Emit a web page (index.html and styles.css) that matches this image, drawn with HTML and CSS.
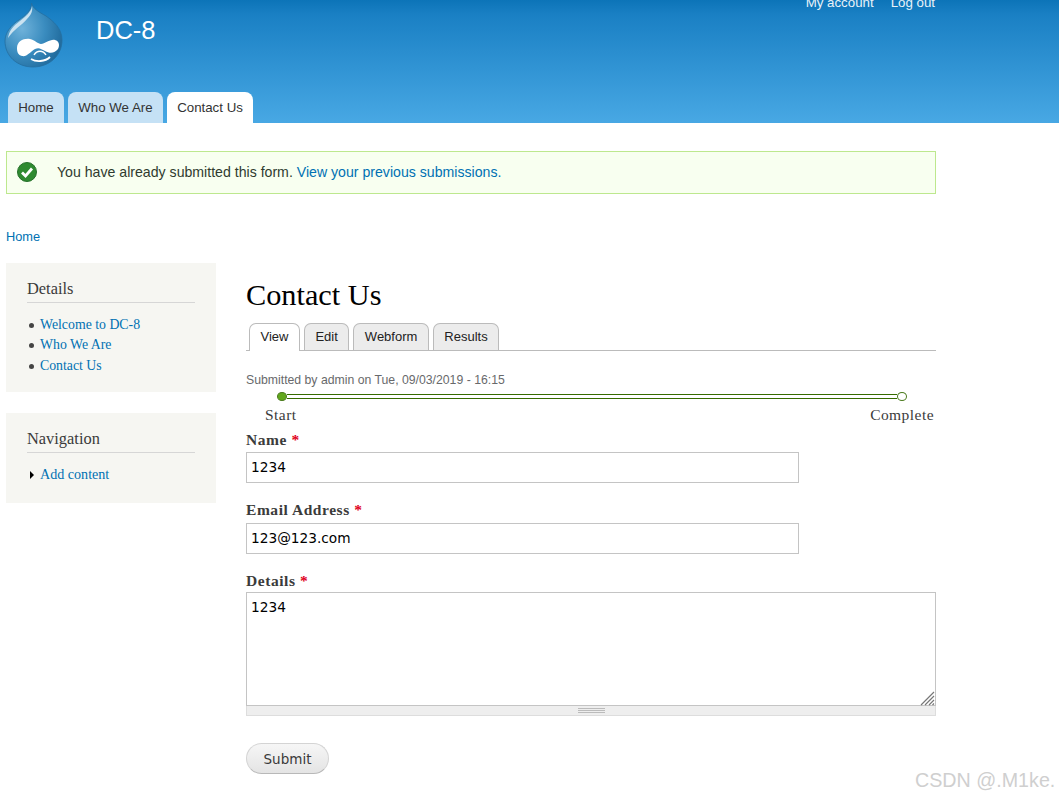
FILE: index.html
```html
<!DOCTYPE html>
<html lang="en">
<head>
<meta charset="utf-8">
<title>Contact Us | DC-8</title>
<link rel="stylesheet" href="styles.css">
</head>
<body>
<header class="site-header">
  <div class="header-top">
    <svg class="logo" viewBox="0 0 60 66" width="60" height="66" aria-label="Drupal logo">
      <defs>
        <radialGradient id="drop" cx="0.3" cy="0.4" r="0.8">
          <stop offset="0" stop-color="#6fb2da"/>
          <stop offset="0.5" stop-color="#3a8cbf"/>
          <stop offset="1" stop-color="#1b6496"/>
        </radialGradient>
      </defs>
      <path d="M27.5 1 C28 8 22 13 15 18 C7 23 1 31 1 39 C1 54 13 65 29 65 C45 65 58 54 58 38 C58 26 49 19 42 14 C35 10 29 7 27.5 1 Z" fill="url(#drop)" stroke="#256f9f" stroke-width="0.8"/>
      <path d="M28 4 C27 10 22 14 16 19 C9 24 5 29 4 36 C10 27 17 24 23 17 C27 13 29 9 28 4 Z" fill="#d6e9f4" opacity="0.9"/>
      <path d="M13 46 C13 39 20 36 26 37 C31 38 34 42 37 42 C41 42 46 37 51 38 C55 39 56 43 54 47 C51 51 46 52 41 49 C37 47 35 45 31 47 C26 50 23 55 18 54 C14 53 13 50 13 46 Z" fill="#fff"/>
      <path d="M30 53 C33 48 39 48 42 53" fill="none" stroke="#fff" stroke-width="1.4"/>
      <path d="M27 57 C32 60 41 60 46 55" fill="none" stroke="#fff" stroke-width="1.8"/>
    </svg>
    <div class="site-name">DC-8</div>
    <nav class="secondary-menu">
      <a href="#">My account</a>
      <a href="#">Log out</a>
    </nav>
  </div>
  <nav class="main-menu">
    <a class="main-tab" href="#">Home</a>
    <a class="main-tab" href="#">Who We Are</a>
    <a class="main-tab is-active" href="#">Contact Us</a>
  </nav>
</header>

<div class="page">
  <div class="message">
    <svg class="check" viewBox="0 0 20 20" width="20" height="20">
      <circle cx="10" cy="10" r="9.5" fill="#2f8a30" stroke="#26702a"/>
      <path d="M5 10.5 L8.5 14 L15 6.5" fill="none" stroke="#fff" stroke-width="2.8"/>
    </svg>
    <p class="message-text">You have already submitted this form. <a href="#">View your previous submissions.</a></p>
  </div>

  <div class="breadcrumb"><a href="#">Home</a></div>

  <div class="columns">
    <aside class="sidebar">
      <section class="block">
        <h2 class="block-title">Details</h2>
        <ul class="block-list">
          <li><a href="#">Welcome to DC-8</a></li>
          <li><a href="#">Who We Are</a></li>
          <li><a href="#">Contact Us</a></li>
        </ul>
      </section>
      <section class="block block-nav">
        <h2 class="block-title">Navigation</h2>
        <div class="nav-item">
          <span class="arrow"></span>
          <a href="#">Add content</a>
        </div>
      </section>
    </aside>

    <main class="content">
      <h1 class="page-title">Contact Us</h1>
      <ul class="tabs">
        <li class="tab is-active"><a href="#">View</a></li>
        <li class="tab"><a href="#">Edit</a></li>
        <li class="tab"><a href="#">Webform</a></li>
        <li class="tab"><a href="#">Results</a></li>
      </ul>
      <p class="submitted">Submitted by admin on Tue, 09/03/2019 - 16:15</p>

      <div class="progress">
        <div class="progress-track">
          <span class="dot dot-done"></span>
          <span class="bar"></span>
          <span class="dot"></span>
        </div>
        <div class="progress-labels">
          <span>Start</span>
          <span>Complete</span>
        </div>
      </div>

      <form class="form">
        <div class="field field-name">
          <label class="label" for="name">Name <span class="req">*</span></label>
          <input class="input" id="name" type="text" value="1234">
        </div>
        <div class="field field-email">
          <label class="label" for="email">Email Address <span class="req">*</span></label>
          <input class="input input-email" id="email" type="text" value="123@123.com">
        </div>
        <div class="field field-details">
          <label class="label" for="details">Details <span class="req">*</span></label>
          <div class="textarea-wrap">
            <textarea class="textarea" id="details">1234</textarea>
            <svg class="resizer" viewBox="0 0 15 15" width="15" height="15">
              <path d="M1 14 L14 1 M5 14 L14 5 M9 14 L14 9 M12.5 14 L14 12.5" stroke="#777" stroke-width="1.2" fill="none"/>
            </svg>
          </div>
          <div class="grippie"><span class="grip"></span></div>
        </div>
        <button class="submit" type="button">Submit</button>
      </form>
    </main>
  </div>
</div>
<div class="watermark">CSDN @.M1ke.</div>
</body>
</html>
```
FILE: styles.css
```css
* { box-sizing: border-box; }
html, body { margin: 0; padding: 0; height: 797px; overflow: hidden; }
body { background: #fff; color: #3b3b3b; font-family: "Liberation Sans", Arial, sans-serif; font-size: 14px; position: relative; }
a { color: #0071b3; text-decoration: none; }
p, h1, h2, ul { margin: 0; padding: 0; }

.site-header { height: 123px; background: linear-gradient(#0c74b8 0, #1a80c4 12%, #48a8e4 100%); display: flex; flex-direction: column; overflow: hidden; }
.header-top { display: flex; align-items: flex-start; height: 92px; width: 935px; }
.logo { margin: 2px 0 0 4px; flex: none; }
.site-name { margin: 14px 0 0 32px; font-size: 25.5px; line-height: 32px; color: #fff; flex: 1; }
.secondary-menu { display: flex; gap: 17px; margin-top: -5px; font-size: 13.3px; line-height: 16px; }
.secondary-menu a { color: #e8f2f9; }
.main-menu { display: flex; gap: 4px; padding-left: 8px; height: 31px; }
.main-tab { display: flex; align-items: center; padding: 0 10.25px 1px; height: 31px; background: #c5e1f5; color: #333; border-radius: 8px 8px 0 0; font-size: 13.3px; }
.main-tab.is-active { background: #fff; }

.page { width: 936px; padding-left: 6px; padding-top: 28px; }
.message { display: flex; align-items: center; height: 43px; background: #f8fff0; border: 1px solid #bde88e; padding: 0 0 1px 10px; }
.check { flex: none; }
.message-text { margin-left: 20px; line-height: 20px; color: #2f3b2f; font-size: 14.13px; }
.breadcrumb { margin-top: 35px; font-size: 12.8px; line-height: 16px; }

.columns { display: flex; gap: 30px; margin-top: 18px; }
.sidebar { width: 210px; flex: none; }
.block { background: #f6f6f2; padding: 16px 21px 0; height: 129px; }
.block-nav { margin-top: 21px; height: 90px; }
.block-title { font-family: "Liberation Serif", serif; font-weight: normal; font-size: 16.4px; line-height: 20px; color: #3b3b3b; border-bottom: 1px solid #d6d6d6; padding-bottom: 4px; height: 24px; }
.block-list { list-style: none; margin-top: 12px; font-family: "Liberation Serif", serif; font-size: 13.8px; }
.block-list li { height: 20.4px; line-height: 20px; padding-left: 13px; position: relative; }
.block-list li::before { content: ""; position: absolute; left: 2px; top: 8px; width: 5px; height: 5px; border-radius: 50%; background: #444; }
.nav-item { display: flex; align-items: center; margin-top: 11px; font-family: "Liberation Serif", serif; font-size: 14.1px; line-height: 20px; }
.arrow { width: 0; height: 0; border-left: 4px solid #000; border-top: 4px solid transparent; border-bottom: 4px solid transparent; margin: 2px 6px 0 3px; }

.content { width: 690px; flex: none; }
.page-title { font-family: "Liberation Serif", serif; font-weight: normal; font-size: 30.3px; line-height: 36px; color: #000; margin-top: 14px; }
.tabs { list-style: none; display: flex; gap: 4px; padding-left: 3px; margin-top: 10px; height: 28px; border-bottom: 1px solid #bbb; }
.tab { height: 27px; background: #ececec; border: 1px solid #bbb; border-bottom: 0; border-radius: 7px 7px 0 0; padding: 0 10.5px; font-size: 13px; line-height: 25px; }
.tab.is-active { background: #fff; height: 28px; }
.tab a { color: #222; }
.submitted { margin-top: 21px; font-size: 12.25px; line-height: 16px; color: #68696b; }

.progress { margin-top: 4px; }
.progress-track { display: flex; align-items: center; height: 9px; padding-left: 31px; width: 661px; }
.dot { width: 10px; height: 9px; border-radius: 50%; background: #fff; border: 1px solid #4a7a1c; flex: none; }
.dot-done { background: #62a81c; }
.bar { flex: 1; height: 5px; border-top: 1px solid #366b00; border-bottom: 1px solid #366b00; background: #fff; }
.progress-labels { display: flex; justify-content: space-between; padding: 0 2px 0 19px; font-family: "Liberation Serif", serif; font-size: 15.5px; letter-spacing: 0.45px; line-height: 18px; margin-top: 5px; width: 690px; color: #3b3b3b; }

.form { display: flex; flex-direction: column; }
.field-name { margin-top: 6px; }
.field-email { margin-top: 17px; }
.field-details { margin-top: 17px; }
.label { display: block; font-family: "Liberation Serif", serif; font-weight: bold; font-size: 15.5px; letter-spacing: 0.55px; line-height: 20px; color: #3b3b3b; }
.req { color: #e00020; }
.input { display: block; width: 553px; height: 31px; margin-top: 2px; border: 1px solid #c4c4c4; padding: 0 4px 1px; font-family: "DejaVu Sans", sans-serif; font-size: 13.7px; color: #000; background: #fff; outline: 0; }
.input-email { margin-top: 3px; }
.textarea-wrap { position: relative; height: 114px; margin-top: 1px; }
.textarea { display: block; width: 690px; height: 114px; border: 1px solid #c4c4c4; padding: 6px 4px; font-family: "DejaVu Sans", sans-serif; font-size: 13.7px; line-height: 17px; color: #000; resize: none; outline: 0; }
.resizer { position: absolute; right: 1px; bottom: 0; }
.grippie { height: 10px; background: #eee; border: 1px solid #ddd; border-top: 0; display: flex; justify-content: center; align-items: center; }
.grip { width: 27px; height: 5px; border-top: 1px solid #bbb; border-bottom: 1px solid #bbb; background: linear-gradient(#bbb, #bbb) center / 100% 1px no-repeat; }
.submit { width: 83px; height: 31px; margin-top: 27px; border: 1px solid #d4d4d4; border-bottom-color: #b8b8b8; border-radius: 16px; background: linear-gradient(#f6f6f6, #e4e4e4); font-family: "DejaVu Sans", sans-serif; font-size: 13.5px; color: #3a3a3a; padding: 0; }

.watermark { position: absolute; left: 915px; top: 769px; font-family: "Liberation Sans", sans-serif; font-size: 19.7px; line-height: 22px; color: #cfcfcf; white-space: nowrap; }
```
